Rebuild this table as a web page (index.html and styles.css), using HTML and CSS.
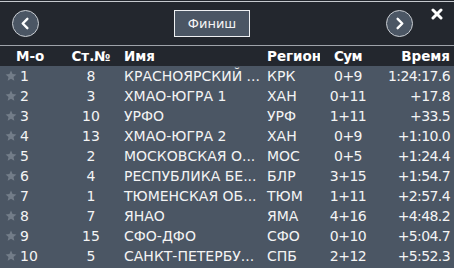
FILE: index.html
```html
<!DOCTYPE html>
<html>
<head>
<meta charset="utf-8">
<link rel="stylesheet" href="styles.css">
</head>
<body>
<div class="panel">
  <div class="toolbar">
    <button class="circle prev" aria-label="Назад"><svg width="27" height="27" viewBox="0 0 27 27"><polyline points="15.5,8.5 10.5,13.5 15.5,18.5" fill="none" stroke="#fff" stroke-width="2.6" stroke-linecap="round" stroke-linejoin="round"/></svg></button>
    <button class="finish">Финиш</button>
    <button class="circle next" aria-label="Вперёд"><svg width="27" height="27" viewBox="0 0 27 27"><polyline points="11.5,8.5 16.5,13.5 11.5,18.5" fill="none" stroke="#fff" stroke-width="2.6" stroke-linecap="round" stroke-linejoin="round"/></svg></button>
    <span class="close"><svg width="12" height="12" viewBox="0 0 12 12"><path d="M2 2 L10 10 M10 2 L2 10" stroke="#fff" stroke-width="3" stroke-linecap="round"/></svg></span>
  </div>
  <div class="row head">
    <div class="c-rank">М-о</div>
    <div class="c-no">Ст.№</div>
    <div class="c-name">Имя</div>
    <div class="c-reg">Регион</div>
    <div class="c-sum">Сум</div>
    <div class="c-time">Время</div>
  </div>
  <div class="body">
    <div class="row"><div class="c-rank"><svg class="star" viewBox="0 0 12 12"><path d="M6 0.6 L7.55 4.1 L11.4 4.4 L8.5 6.95 L9.35 10.8 L6 8.8 L2.65 10.8 L3.5 6.95 L0.6 4.4 L4.45 4.1 Z"/></svg>1</div><div class="c-no">8</div><div class="c-name">КРАСНОЯРСКИЙ ...</div><div class="c-reg">КРК</div><div class="c-sum">0+9</div><div class="c-time">1:24:17.6</div></div>
    <div class="row"><div class="c-rank"><svg class="star" viewBox="0 0 12 12"><path d="M6 0.6 L7.55 4.1 L11.4 4.4 L8.5 6.95 L9.35 10.8 L6 8.8 L2.65 10.8 L3.5 6.95 L0.6 4.4 L4.45 4.1 Z"/></svg>2</div><div class="c-no">3</div><div class="c-name">ХМАО-ЮГРА 1</div><div class="c-reg">ХАН</div><div class="c-sum">0+11</div><div class="c-time">+17.8</div></div>
    <div class="row"><div class="c-rank"><svg class="star" viewBox="0 0 12 12"><path d="M6 0.6 L7.55 4.1 L11.4 4.4 L8.5 6.95 L9.35 10.8 L6 8.8 L2.65 10.8 L3.5 6.95 L0.6 4.4 L4.45 4.1 Z"/></svg>3</div><div class="c-no">10</div><div class="c-name">УРФО</div><div class="c-reg">УРФ</div><div class="c-sum">1+11</div><div class="c-time">+33.5</div></div>
    <div class="row"><div class="c-rank"><svg class="star" viewBox="0 0 12 12"><path d="M6 0.6 L7.55 4.1 L11.4 4.4 L8.5 6.95 L9.35 10.8 L6 8.8 L2.65 10.8 L3.5 6.95 L0.6 4.4 L4.45 4.1 Z"/></svg>4</div><div class="c-no">13</div><div class="c-name">ХМАО-ЮГРА 2</div><div class="c-reg">ХАН</div><div class="c-sum">0+9</div><div class="c-time">+1:10.0</div></div>
    <div class="row"><div class="c-rank"><svg class="star" viewBox="0 0 12 12"><path d="M6 0.6 L7.55 4.1 L11.4 4.4 L8.5 6.95 L9.35 10.8 L6 8.8 L2.65 10.8 L3.5 6.95 L0.6 4.4 L4.45 4.1 Z"/></svg>5</div><div class="c-no">2</div><div class="c-name">МОСКОВСКАЯ О...</div><div class="c-reg">МОС</div><div class="c-sum">0+5</div><div class="c-time">+1:24.4</div></div>
    <div class="row"><div class="c-rank"><svg class="star" viewBox="0 0 12 12"><path d="M6 0.6 L7.55 4.1 L11.4 4.4 L8.5 6.95 L9.35 10.8 L6 8.8 L2.65 10.8 L3.5 6.95 L0.6 4.4 L4.45 4.1 Z"/></svg>6</div><div class="c-no">4</div><div class="c-name">РЕСПУБЛИКА БЕ...</div><div class="c-reg">БЛР</div><div class="c-sum">3+15</div><div class="c-time">+1:54.7</div></div>
    <div class="row"><div class="c-rank"><svg class="star" viewBox="0 0 12 12"><path d="M6 0.6 L7.55 4.1 L11.4 4.4 L8.5 6.95 L9.35 10.8 L6 8.8 L2.65 10.8 L3.5 6.95 L0.6 4.4 L4.45 4.1 Z"/></svg>7</div><div class="c-no">1</div><div class="c-name">ТЮМЕНСКАЯ ОБ...</div><div class="c-reg">ТЮМ</div><div class="c-sum">1+11</div><div class="c-time">+2:57.4</div></div>
    <div class="row"><div class="c-rank"><svg class="star" viewBox="0 0 12 12"><path d="M6 0.6 L7.55 4.1 L11.4 4.4 L8.5 6.95 L9.35 10.8 L6 8.8 L2.65 10.8 L3.5 6.95 L0.6 4.4 L4.45 4.1 Z"/></svg>8</div><div class="c-no">7</div><div class="c-name">ЯНАО</div><div class="c-reg">ЯМА</div><div class="c-sum">4+16</div><div class="c-time">+4:48.2</div></div>
    <div class="row"><div class="c-rank"><svg class="star" viewBox="0 0 12 12"><path d="M6 0.6 L7.55 4.1 L11.4 4.4 L8.5 6.95 L9.35 10.8 L6 8.8 L2.65 10.8 L3.5 6.95 L0.6 4.4 L4.45 4.1 Z"/></svg>9</div><div class="c-no">15</div><div class="c-name">СФО-ДФО</div><div class="c-reg">СФО</div><div class="c-sum">0+10</div><div class="c-time">+5:04.7</div></div>
    <div class="row"><div class="c-rank"><svg class="star" viewBox="0 0 12 12"><path d="M6 0.6 L7.55 4.1 L11.4 4.4 L8.5 6.95 L9.35 10.8 L6 8.8 L2.65 10.8 L3.5 6.95 L0.6 4.4 L4.45 4.1 Z"/></svg>10</div><div class="c-no">5</div><div class="c-name">САНКТ-ПЕТЕРБУ...</div><div class="c-reg">СПБ</div><div class="c-sum">2+12</div><div class="c-time">+5:52.3</div></div>
  </div>
</div>
</body>
</html>
```

FILE: styles.css
```css
html, body {
  margin: 0;
  padding: 0;
  background: #23272e;
  height: 100%;
  overflow: hidden;
}
.panel {
  width: 454px;
  height: 268px;
  padding-top: 1px;
  box-sizing: border-box;
  background: #23272e;
  font-family: "DejaVu Sans", sans-serif;
  font-size: 14px;
  color: #f4f4f4;
}
.toolbar {
  border-top: 1px solid #c5c9ce;
  border-bottom: 1px solid #9ea3aa;
  height: 45px;
  box-sizing: border-box;
  display: flex;
  align-items: center;
  padding-left: 12px;
  position: relative;
}
.circle {
  width: 27px;
  height: 27px;
  border-radius: 50%;
  border: 1px solid #c9cdd2;
  background: #4b5664;
  padding: 0;
  box-sizing: border-box;
  display: flex;
  align-items: center;
  justify-content: center;
}
.circle svg { display: block; }
.finish {
  margin-left: 135px;
  width: 76px;
  height: 27px;
  box-sizing: border-box;
  border: 1px solid #eef0f2;
  background: #4b5664;
  color: #f4f4f4;
  font-family: "DejaVu Sans", sans-serif;
  font-size: 13px;
  padding: 0;
}
.next { margin-left: 136px; }
.close {
  position: absolute;
  left: 431px;
  top: 6px;
  width: 12px;
  height: 12px;
}
.close svg { display: block; }
.row {
  display: grid;
  grid-template-columns: 66px 50px 146px 58px 56px 1fr;
  height: 20px;
  align-items: center;
  white-space: nowrap;
  line-height: 20px;
}
.row > div { overflow: hidden; }
.head {
  height: 20px;
  font-weight: bold;
  color: #ffffff;
  font-size: 13.5px;
}
.body {
  background: #4b5664;
  height: 202px;
}
.c-rank {
  display: flex;
  align-items: center;
  padding-left: 5px;
}
.head .c-rank { padding-left: 16px; }
.star {
  width: 12px;
  height: 12px;
  fill: #737d89;
  margin-right: 3px;
  flex: none;
}
.c-no { text-align: center; }
.c-name { padding-left: 8px; }
.c-reg { padding-left: 5px; }
.c-sum {
  text-align: center;
  letter-spacing: -0.5px;
}
.body .c-time {
  letter-spacing: -0.6px;
}
.c-time {
  text-align: right;
  padding-right: 4px;
}
```
